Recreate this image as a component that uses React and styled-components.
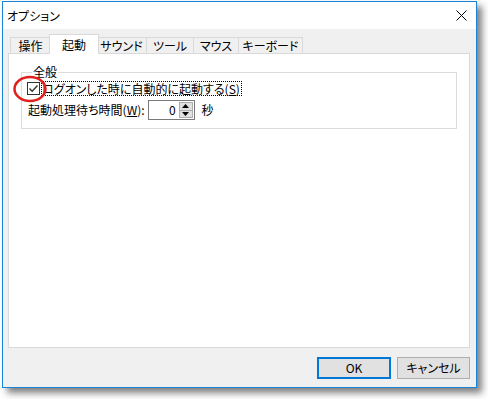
import React from "react";
import styled, { createGlobalStyle } from "styled-components";

const Global = createGlobalStyle`
  html, body { margin: 0; padding: 0; background: #ffffff; }
  body { font-family: "Noto Sans CJK JP", "Noto Sans", sans-serif; font-size: 12px; color: #000; }
  * { box-sizing: border-box; }
`;

const Page = styled.div`
  padding: 1px 0 0 2px;
  width: 488px;
  height: 399px;
`;

const Window = styled.div`
  position: relative;
  width: 475px;
  height: 387px;
  border: 1px solid #1883d7;
  background: #f0f0f0;
  display: flex;
  flex-direction: column;
  box-shadow: 5px 5px 7px rgba(0, 0, 0, 0.5);
`;

const TitleBar = styled.div`
  height: 27px;
  background: #ffffff;
  display: flex;
  align-items: center;
  justify-content: space-between;
  padding: 0 9px 0 4px;
  flex: none;
`;

const Title = styled.span`
  font-size: 12px;
  line-height: 14px;
  font-feature-settings: "palt";
`;

const Body = styled.div`
  flex: 1;
  display: flex;
  flex-direction: column;
  padding: 5px 6px 9px 5px;
`;

const TabStrip = styled.div`
  display: flex;
  align-items: flex-end;
  padding-left: 2px;
  height: 20px;
  position: relative;
  z-index: 1;
`;

const Tab = styled.div`
  width: ${(p) => p.$w}px;
  height: ${(p) => (p.$active ? 20 : 17)}px;
  margin-left: ${(p) => (p.$active ? -2 : 0)}px;
  margin-right: ${(p) => (p.$active ? -2 : 0)}px;
  background: ${(p) => (p.$active ? "#ffffff" : "#f0f0f0")};
  border: 1px solid #d9d9d9;
  border-bottom: ${(p) => (p.$active ? "none" : "1px solid #d9d9d9")};
  border-left: ${(p) => (p.$first || p.$active ? "1px solid #d9d9d9" : "none")};
  display: flex;
  align-items: center;
  justify-content: center;
  padding-top: ${(p) => (p.$active ? 0 : 1)}px;
  font-size: 12px;
  line-height: 14px;
  font-feature-settings: "palt";
  white-space: nowrap;
  position: relative;
  z-index: ${(p) => (p.$active ? 2 : 0)};
`;

const Panel = styled.div`
  height: 295px;
  margin-top: -1px;
  background: #ffffff;
  border: 1px solid #d9d9d9;
  padding: 11px 12px 0 12px;
`;

const Group = styled.fieldset`
  position: relative;
  margin: 0;
  border: 1px solid #dcdcdc;
  padding: 2px 5px 8px 5px;
  display: flex;
  flex-direction: column;
  gap: 4px;
`;

const Legend = styled.legend`
  margin-left: 5px;
  padding: 0 1px;
  font-size: 12px;
  line-height: 14px;
`;

const Row = styled.div`
  display: flex;
  align-items: center;
  height: ${(p) => p.$h}px;
`;

const CheckBox = styled.span`
  width: 13px;
  height: 13px;
  border: 1px solid #333333;
  background: #ffffff;
  display: flex;
  align-items: center;
  justify-content: center;
  flex: none;
`;

const FocusLabel = styled.span`
  margin-left: 1px;
  border: 1px dotted #000;
  padding: 0 1px 0 0;
  height: 15px;
  display: flex;
  align-items: center;
  font-size: 12px;
  line-height: 13px;
  font-feature-settings: "palt";
  white-space: nowrap;
`;

const Text = styled.span`
  font-size: 12px;
  line-height: 14px;
  white-space: nowrap;
  font-feature-settings: "palt";
  margin-left: ${(p) => p.$ml || 0}px;
`;

const U = styled.span`
  text-decoration: underline;
`;

const Spinner = styled.div`
  margin-left: 3px;
  width: 47px;
  height: 20px;
  border: 1px solid #7a7a7a;
  display: flex;
  background: #fff;
`;

const SpinValue = styled.span`
  flex: 1;
  text-align: right;
  padding-right: 3px;
  font-size: 12px;
  line-height: 18px;
`;

const SpinButtons = styled.div`
  width: 15px;
  display: flex;
  flex-direction: column;
  padding: 1px 1px 1px 0;
`;

const SpinBtn = styled.div`
  flex: 1;
  background: #e1e1e1;
  border: 1px solid #adadad;
  display: flex;
  align-items: center;
  justify-content: center;
  margin-top: ${(p) => (p.$down ? -1 : 0)}px;
`;

const Circle = styled.svg`
  position: absolute;
  left: -9px;
  top: -4px;
  pointer-events: none;
`;

const Footer = styled.div`
  display: flex;
  justify-content: flex-end;
  gap: 6px;
  margin-top: 9px;
`;

const Button = styled.button`
  width: ${(p) => p.$w}px;
  height: 22px;
  font-family: inherit;
  font-size: 12px;
  line-height: 14px;
  font-feature-settings: "palt";
  color: #000;
  background: #e1e1e1;
  border: ${(p) => (p.$default ? "2px solid #0078d7" : "1px solid #adadad")};
  padding: 0;
  display: flex;
  align-items: center;
  justify-content: center;
`;

const tabs = [
  { label: "操作", w: 41 },
  { label: "起動", w: 50, active: true },
  { label: "サウンド", w: 50 },
  { label: "ツール", w: 47 },
  { label: "マウス", w: 45 },
  { label: "キーボード", w: 64 },
];

export default function App() {
  return (
    <>
      <Global />
      <Page>
        <Window>
          <TitleBar>
            <Title>オプション</Title>
            <svg width="11" height="11" viewBox="0 0 11 11">
              <path d="M0.5 0.5 L10.5 10.5 M10.5 0.5 L0.5 10.5" stroke="#000" strokeWidth="1" />
            </svg>
          </TitleBar>
          <Body>
            <TabStrip>
              {tabs.map((t, i) => (
                <Tab key={t.label} $w={t.w} $active={t.active} $first={i === 0}>
                  {t.label}
                </Tab>
              ))}
            </TabStrip>
            <Panel>
              <Group>
                <Legend>全般</Legend>
                <Row $h={15}>
                  <CheckBox>
                    <svg width="11" height="11" viewBox="0 0 11 11">
                      <path d="M1.5 5.5 L4.2 8.3 L9.5 2.5" stroke="#333" strokeWidth="1.4" fill="none" />
                    </svg>
                  </CheckBox>
                  <FocusLabel>
                    ログオンした時に自動的に起動する(<U>S</U>)
                  </FocusLabel>
                </Row>
                <Row $h={20}>
                  <Text $ml={1}>
                    起動処理待ち時間(<U>W</U>):
                  </Text>
                  <Spinner>
                    <SpinValue>0</SpinValue>
                    <SpinButtons>
                      <SpinBtn>
                        <svg width="7" height="4" viewBox="0 0 7 4">
                          <path d="M0 4 L3.5 0 L7 4 Z" fill="#000" />
                        </svg>
                      </SpinBtn>
                      <SpinBtn $down>
                        <svg width="7" height="4" viewBox="0 0 7 4">
                          <path d="M0 0 L3.5 4 L7 0 Z" fill="#000" />
                        </svg>
                      </SpinBtn>
                    </SpinButtons>
                  </Spinner>
                  <Text $ml={7}>秒</Text>
                </Row>
                <Circle width="34" height="28" viewBox="0 0 34 28">
                  <ellipse cx="17" cy="14" rx="15.5" ry="12" fill="none" stroke="#e0201c" strokeWidth="2.5" />
                </Circle>
              </Group>
            </Panel>
            <Footer>
              <Button $w={74} $default>OK</Button>
              <Button $w={73}>キャンセル</Button>
            </Footer>
          </Body>
        </Window>
      </Page>
    </>
  );
}
